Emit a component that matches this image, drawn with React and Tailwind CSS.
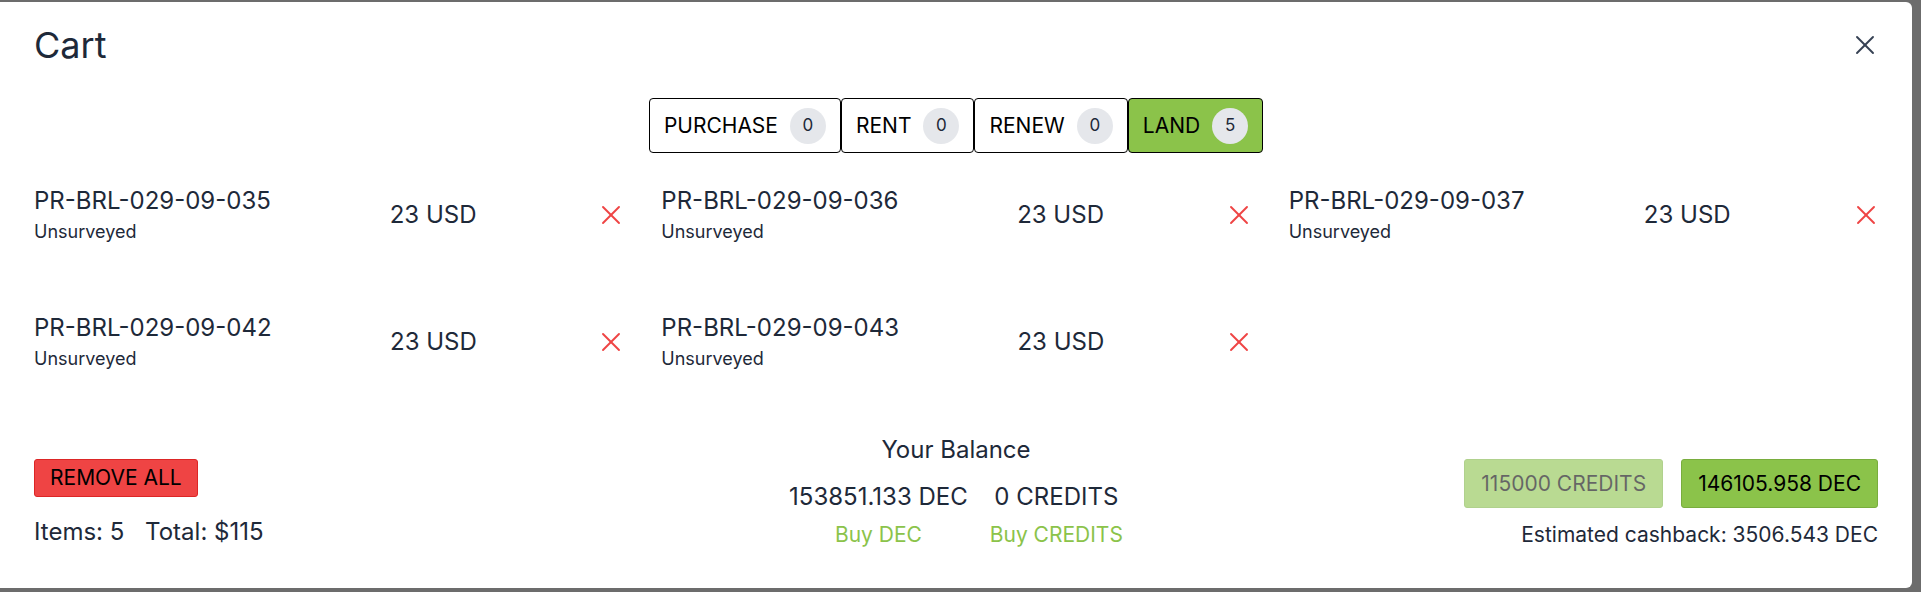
import React, { useState } from "react";
import { X } from "lucide-react";

const tabs = [
  { label: "PURCHASE", count: 0 },
  { label: "RENT", count: 0 },
  { label: "RENEW", count: 0 },
  { label: "LAND", count: 5 },
];

const items = [
  "PR-BRL-029-09-035",
  "PR-BRL-029-09-036",
  "PR-BRL-029-09-037",
  "PR-BRL-029-09-042",
  "PR-BRL-029-09-043",
];

function CartItem({ name }) {
  return (
    <div className="flex items-center justify-between">
      <div className="flex flex-col">
        <span className="text-[24px] leading-[34px]">{name}</span>
        <span className="text-[18px] leading-[27px]">Unsurveyed</span>
      </div>
      <span className="text-[24px] leading-[36px]">23 USD</span>
      <button className="flex h-8 w-8 items-center justify-center text-[#ef4444]">
        <X size={32} strokeWidth={1.4} />
      </button>
    </div>
  );
}

export default function App() {
  const [active, setActive] = useState("LAND");

  return (
    <div className="h-[592px] w-[1921px] overflow-hidden bg-[#6c6c6c] pt-[2px] font-['Inter','Noto_Sans',sans-serif] text-gray-800">
      <div className="flex h-[586px] w-[1912px] flex-col rounded-r-[6px] bg-white px-[34px] pt-[16px]">
        {/* Header */}
        <div className="-mr-[3px] flex h-[54px] items-center justify-between">
          <h2 className="text-[36px] leading-[54px]">Cart</h2>
          <button className="flex h-8 w-8 items-center justify-center text-gray-700">
            <X size={32} strokeWidth={1.4} />
          </button>
        </div>

        {/* Tabs */}
        <div className="mt-[26px] flex justify-center">
          {tabs.map((t) => (
            <button
              key={t.label}
              onClick={() => setActive(t.label)}
              className={`flex h-[55px] items-center gap-[12px] rounded-[4px] border border-black px-[14px] text-[21px] text-black ${
                active === t.label ? "bg-[#8bc34a]" : "bg-white"
              }`}
            >
              {t.label}
              <span className="flex h-9 w-9 items-center justify-center rounded-full bg-gray-200 text-[17px] text-gray-800">
                {t.count}
              </span>
            </button>
          ))}
        </div>

        {/* Items */}
        <div className="-mr-[4px] mt-[31px] grid grid-cols-3 gap-x-[34px] gap-y-[66px]">
          {items.map((n) => (
            <CartItem key={n} name={n} />
          ))}
        </div>

        {/* Footer */}
        <div className="mt-[60px] flex items-end justify-between">
          <div className="flex w-[500px] flex-col items-start">
            <button className="flex h-[38px] items-center rounded-[3px] border border-[#dc2626] bg-[#ef4444] px-[15px] text-[21px] text-black">
              REMOVE ALL
            </button>
            <div className="mt-[17px] text-[24px] leading-[36px]">
              Items: 5 <span className="ml-[14px]">Total: $115</span>
            </div>
          </div>

          <div className="flex flex-col items-center">
            <span className="text-[24px] leading-[36px]">Your Balance</span>
            <div className="mt-[11px] flex gap-[22px]">
              <div className="flex flex-col items-center">
                <span className="text-[24px] leading-[36px]">153851.133 DEC</span>
                <a className="mt-[4px] text-[21px] leading-[31px] text-[#8bc34a]">Buy DEC</a>
              </div>
              <div className="flex flex-col items-center">
                <span className="text-[24px] leading-[36px]">0 CREDITS</span>
                <a className="mt-[4px] text-[21px] leading-[31px] text-[#8bc34a]">Buy CREDITS</a>
              </div>
            </div>
          </div>

          <div className="flex w-[500px] flex-col items-end">
            <div className="flex gap-[18px]">
              <button className="h-[49px] rounded-[3px] border border-[#7cb342] bg-[#8bc34a] px-[16px] text-[21px] text-black opacity-60">
                115000 CREDITS
              </button>
              <button className="h-[49px] rounded-[3px] border border-[#79ad3e] bg-[#8bc34a] px-[16px] text-[21px] text-black">
                146105.958 DEC
              </button>
            </div>
            <span className="mt-[11px] text-[21px] leading-[31px]">
              Estimated cashback: 3506.543 DEC
            </span>
          </div>
        </div>
      </div>
    </div>
  );
}
